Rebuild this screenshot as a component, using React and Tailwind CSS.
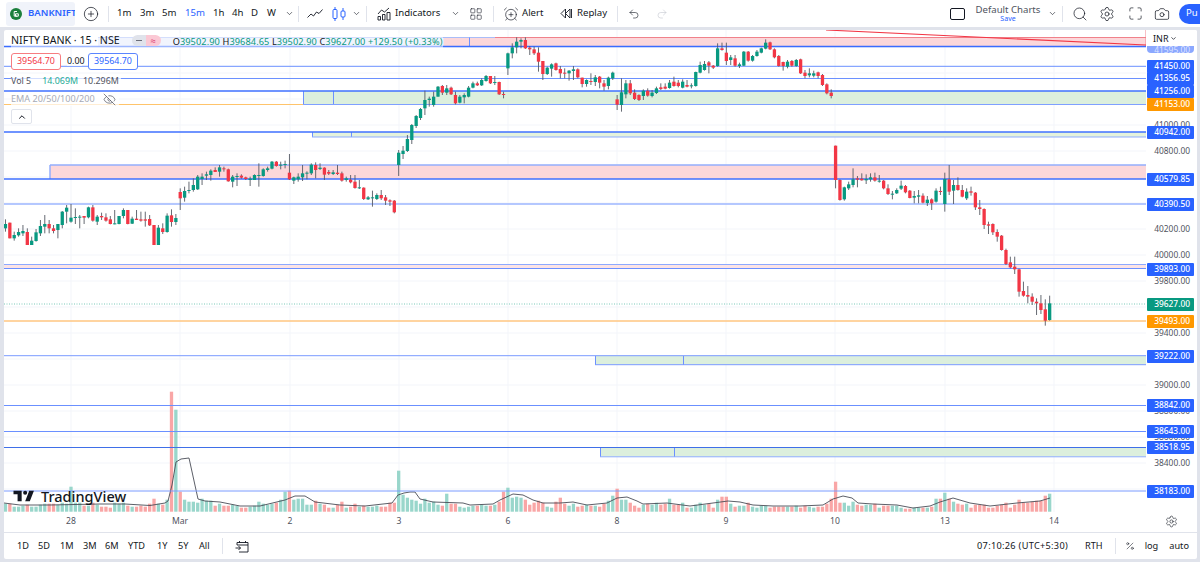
import React from "react";
import { ChevronDown, ChevronUp, CirclePlus, Search, Settings, Maximize, Camera, Undo2, Redo2, AlarmClockPlus, EyeOff, Percent, LayoutGrid } from "lucide-react";

const X0 = 5.47, STEP = 4.369;
const idxOf = (x) => Math.round((x - X0) / STEP);
const xOf = (i) => X0 + STEP * i;

// [zx, green?, top, bottom, wickTop, wickBottom] in zoom coordinates
const S1 = [[18,1,282,295,268,305],[31,0,278,325,278,325],[44,1,315,325,305,332],[57,1,306,316,295,320],[70,1,303,310,285,318],[84,0,306,345,295,345],[97,1,332,345,320,345],[110,1,307,333,297,335],[123,1,288,310,270,318],[137,1,282,290,255,310],[150,0,282,295,270,310],[163,0,295,303,285,310],[176,1,282,300,282,325],[189,1,245,285,243,295],[203,1,233,245,225,280],[216,1,263,275,222,278],[229,1,261,263,235,282],[242,1,260,262,255,295],[255,0,258,263,258,282],[269,1,232,262,230,265],[282,0,232,272,225,275],[295,1,260,275,255,285],[308,0,258,262,248,270],[321,0,262,272,250,275],[334,0,268,282,258,283],[347,1,280,282,240,283],[360,1,258,282,258,283],[373,1,240,258,235,265],[386,0,240,282,240,283],[400,1,266,281,260,282],[413,0,266,270,240,270],[426,0,268,272,245,275],[439,0,268,272,245,290],[452,0,267,286,255,288],[465,0,285,345,285,345],[478,1,293,345,285,345],[491,0,295,306,280,312],[504,1,257,306,250,308],[517,0,256,276,238,290],[531,1,264,276,252,285],[544,0,186,205,175,240],[557,1,183,203,170,215],[570,1,180,183,155,190],[583,1,165,180,145,185],[597,1,140,178,135,180],[610,1,140,147,130,165],[623,1,133,137,125,150],[636,1,122,135,118,152],[649,0,120,126,112,125],[662,1,112,125,105,140],[675,0,115,118,110,125],[688,0,118,154,116,155],[701,1,140,155,135,172],[714,1,138,140,130,168],[727,0,137,143,133,146],[740,0,142,147,140,150],[753,1,146,150,140,168],[766,1,135,150,133,150],[779,1,135,137,100,170],[792,1,118,138,115,140],[805,1,115,120,110,125],[818,1,95,116,93,118],[831,0,95,108,93,110],[844,1,104,106,95,118],[857,1,102,104,92,115],[870,0,128,148,72,150],[883,1,142,152,140,162],[896,1,140,148,130,155],[909,1,130,142,105,153],[922,1,128,130,124,148],[935,1,104,130,100,135],[948,0,105,120,97,145],[961,1,113,117,100,120],[974,0,113,134,112,150],[987,0,126,131,120,135],[1000,1,127,132,120,135],[1013,0,128,132,105,135],[1026,0,130,152,125,155],[1039,1,145,150,140,155],[1052,0,149,157,135,160],[1066,0,155,174,135,176],[1079,1,172,174,150,177],[1092,0,173,207,172,210],[1105,1,202,208,198,210],[1118,1,202,205,182,230],[1131,1,195,207,190,210],[1144,0,195,205,180,210],[1157,0,202,212,195,225],[1170,0,211,215,208,228],[1185,0,212,247,210,250]];
// real pixel coordinates
const S2 = [[399.3,1,152.7,165,150,176],[403.7,1,150.7,154,146,159],[408,1,139,151,135,152],[412.3,1,125,140,124,144],[416.7,1,116,126,115,128],[421,1,109,118,108,120]];
const S3 = [[77,1,300,325,272,345],[90,1,296,300,290,320],[103,1,290,315,275,320],[116,1,260,290,258,290],[129,0,258,278,255,285],[142,1,265,278,255,285],[155,0,263,283,260,285],[168,0,285,310,275,313],[181,1,290,308,285,310],[194,1,285,292,280,310],[207,1,263,290,258,292],[220,1,250,263,245,265],[233,0,250,256,245,258],[246,1,240,256,235,258],[259,1,228,243,225,245],[272,0,228,250,228,252],[285,1,246,248,228,255],[298,0,246,283,245,285],[311,0,282,284,275,295],[324,1,160,205,158,225],[337,1,142,160,130,175],[350,1,125,142,112,160],[363,1,120,125,115,145],[376,0,120,145,112,147],[389,0,143,148,138,165],[402,0,148,160,140,165],[415,0,158,185,142,215],[428,0,183,222,183,240],[441,1,203,222,200,225],[454,1,193,206,190,230],[467,0,190,210,188,212],[480,0,207,220,198,235],[493,0,218,220,205,235],[506,1,212,220,210,242],[519,1,208,213,198,240],[532,0,208,232,205,235],[545,0,233,252,233,262],[558,1,240,252,238,260],[571,0,243,246,220,255],[584,1,232,246,225,258],[601,0,230,248,228,265],[614,0,250,260,240,272],[627,1,233,258,230,268],[640,1,218,235,215,240],[653,0,298,314,285,330],[666,1,277,315,235,335],[679,1,250,283,240,295],[692,0,250,280,240,285],[705,0,278,297,268,300],[718,0,285,300,283,303],[731,1,272,288,268,300],[744,0,272,287,265,290],[757,1,278,288,270,292],[770,1,265,279,260,282],[783,0,262,267,250,270],[796,0,260,266,250,268],[809,1,248,264,240,266],[822,0,245,258,230,260],[835,0,248,258,240,262],[848,1,245,263,238,265],[861,0,255,260,240,262],[874,1,256,258,250,265],[887,1,216,258,215,260],[900,1,195,218,185,220],[913,1,192,210,183,212],[926,0,187,197,183,220],[939,0,197,203,195,207],[952,1,145,198,130,200],[965,0,145,150,128,152],[978,0,158,183,128,195],[991,1,172,180,165,195],[1004,0,175,197,165,200],[1017,1,193,198,188,204],[1030,1,155,197,153,198],[1043,0,155,182,153,185],[1056,1,168,182,165,185],[1069,1,155,168,150,170],[1082,1,145,158,143,160],[1095,1,128,146,118,148],[1108,0,127,148,125,150],[1121,0,148,172,145,175],[1134,0,168,198,165,200],[1147,0,186,198,185,212],[1160,1,185,200,180,205],[1173,0,183,197,180,200],[1186,1,180,198,177,200],[1199,0,178,220,176,222]];
const S4 = [[15,0,218,228,210,235],[28,1,220,226,205,232],[41,1,220,227,212,232],[54,0,217,228,215,235],[67,0,225,255,222,258],[80,0,253,280,250,283],[95,0,278,288,268,295]];
const S5 = [[107,0,47,150,47,175],[120,0,150,210,148,212],[133,1,172,208,170,212],[146,1,163,175,155,180],[160,1,148,165,115,172],[172,0,145,149,138,172],[185,0,146,151,130,152],[198,1,147,151,133,162],[211,1,142,148,130,155],[226,0,142,152,128,155],[239,1,152,154,135,158],[252,0,152,175,150,178],[265,0,175,192,163,195],[278,1,191,193,183,208],[291,1,180,190,175,192],[304,1,167,176,152,180],[317,0,168,187,165,190],[330,0,182,204,180,205],[343,1,198,203,183,220],[356,1,196,200,180,220],[369,0,197,218,190,220],[382,1,209,219,198,228],[395,0,208,220,205,240],[408,1,182,215,175,218],[421,0,183,186,170,195],[435,1,147,222,128,245],[448,0,148,185,105,195],[461,1,165,182,150,222],[474,0,165,180,142,182],[487,0,180,200,165,202],[500,1,185,205,175,210],[513,0,184,188,170,197],[526,0,188,232,186,240],[539,0,232,237,210,255],[552,0,237,285,235,297],[565,0,283,287,275,312],[578,0,282,307,280,315],[591,0,306,320,298,335],[604,0,317,360,315,362],[619,0,360,402,356,405],[632,0,397,412,380,415],[645,0,410,418,380,432],[658,0,418,485,416,500],[671,0,483,497,455,500],[684,0,495,500,468,520],[697,0,500,515,490,525],[710,0,515,520,505,555],[723,0,520,540,495,552],[736,0,538,572,508,587],[749,1,520,570,497,572]];

const candles = new Map();
const add = (list, ox, oy, k) => list.forEach(([zx, g, t, b, wt, wb]) => {
  const i = idxOf(ox + zx * k);
  candles.set(i, { i, g, t: oy + t * k, b: oy + b * k, wt: oy + wt * k, wb: oy + wb * k });
});
add(S1, 0, 130, 1 / 3);
add(S2, 0, 0, 1);
add(S3, 400, 0, 1 / 3);
add(S4, 800, 0, 1 / 3);
add(S5, 800, 130, 1 / 3);

const V6 = [18,8,31,8,44,5,57,5,70,6,84,7,97,5,110,5,123,7,137,8,150,8,163,8,176,7,189,9,203,8,216,25,229,9,242,9,255,6,269,6,282,9,295,7,308,5,321,5,334,4,347,9,360,8,373,9,386,6,400,5,413,5,426,6,439,5,452,8,465,13,478,8,491,7,504,12,517,120,530,102,543,20,556,12,569,10,582,10,595,9,608,13,621,11,634,11,647,6,660,8,673,6,686,6,699,7,712,6,725,4,738,4,751,5,764,6,777,10,790,8,803,7,816,8,829,9,842,12,855,20,868,21,881,12,894,13,907,13,920,7,933,7,946,11,959,8,972,7,985,4,998,4,1011,7,1024,10,1037,4,1050,5,1063,8,1076,5,1089,6,1102,5,1115,5,1128,6,1141,5,1154,5,1167,9,1180,9,1193,41];
const V8 = [5,17,18,14,33,12,47,11,60,8,73,13,86,9,100,10,113,7,126,6,140,18,153,8,166,8,179,5,192,4,205,5,218,6,231,6,244,7,257,6,270,6,283,7,296,10,309,20,323,24,336,14,349,15,362,14,375,12,388,7,401,9,414,11,427,9,440,5,453,4,466,10,479,14,492,8,505,6,518,8,531,5,544,6,557,7,570,6,583,6,596,5,609,8,622,11,635,16,651,23,664,12,677,12,690,9,703,6,716,4,729,7,742,8,755,7,768,9,781,7,794,8,807,13,820,7,833,7,846,9,859,4,872,4,885,7,898,9,911,7,924,8,937,4,950,12,963,15,976,15,989,8,1002,5,1015,6,1028,6,1041,9,1054,5,1067,4,1080,6,1093,6,1106,4,1119,5,1132,5,1145,5,1158,5,1171,5,1184,6,1197,4];
const V7 = [0,4,13,6,26,5,39,4,52,5,65,5,78,8,91,13,107,30,120,9,133,9,146,6,159,10,172,7,185,6,198,7,211,7,224,8,237,4,250,6,263,6,276,6,289,6,302,4,315,3,328,3,341,4,354,4,367,4,380,4,393,5,406,13,421,13,434,19,447,13,460,10,473,8,486,7,499,8,512,4,525,7,538,7,551,7,564,4,577,4,590,6,603,7,616,9,629,4,642,7,655,12,668,9,681,9,694,10,707,11,720,11,733,16,749,18];
const vols = new Map();
const addV = (l, ox) => { for (let n = 0; n < l.length; n += 2) vols.set(idxOf(ox + l[n] / 3), l[n + 1]); };
addV(V6, 0); addV(V8, 400); addV(V7, 800);

const MA = "4,503 20,505 50,505 100,504 125,504 150,505.5 165,503 168,501 172,485 176,462 181,459 189,458 198,499 205,501 220,502 240,506 260,506 285,500 295,496 305,496 315,502 340,505 365,506 392,503 398,495 404,493 410,492 415,492 420,499 433,502 463,503 470,505 493,504 500,500 513,494 523,495 533,500 543,503 560,503 573,502 587,505 607,503 617,498 627,497 637,501 643,504 667,503 690,506 713,503 728,501 740,502 753,505 773,506 800,506 823,505 833,499 843,496 852,498 858,503 873,504 897,505 913,508 930,506 940,502 953,498 970,503 990,506 1017,503 1040,501 1050,498";

const days = [[71,"28"],[180,"Mar"],[290,"2"],[399,"3"],[508,"6"],[617,"8"],[726,"9"],[835,"10"],[945,"13"],[1054,"14"]];
const gridY = [47,73,99,125,151,177,203,229,255,281,307,333,359,385,411,437,463,489];

const hLines = [
  [66.3,4,"#6b90ff",1],[78.5,4,"#6b90ff",1],[91,4,"#3f70ff",1.3],[104.5,303,"#7fa0ff",1],[104.5,4,"#ffc46b",1,303],
  [132,4,"#3f70ff",1.3],[137,312,"#8fadff",1],[165,50,"#93aefc",1.5],[179,4,"#3f70ff",1.3],[204,4,"#9db6ff",1.5],
  [264.5,4,"#8da9ff",1],[268.5,4,"#6b90ff",1],[321,4,"#ffc680",1.5],[355.7,4,"#7a9bff",1],[364.7,595,"#7a9bff",1],
  [405.5,4,"#6b90ff",1],[431.5,4,"#6b90ff",1],[447.5,4,"#3f6fe8",1],[456.8,600,"#8fadff",1],[491,4,"#7a9bff",1],[46.5,4,"#3a6cff",1.6],
];
const zones = [
  [444,37.5,702,9,"#fcd7da"],[98,37.5,346,9,"#e3e9fb"],[303,91,843,13.5,"#dcefdd"],[312,132,834,5,"#e4f2dc"],[50,165,1096,14,"#fcd7da"],
  [4,264.5,1142,4,"#fce3e5"],[595,355.7,551,9,"#dcefdd"],[600,447.5,546,9.3,"#dcefdd"],
];
const vLines = [[303.5,91,104.5],[333.5,91,104.5],[312.5,132,137],[351.5,132,137],[50,165,179],[469.5,37.5,46.5],[595.5,356,365],[683.5,356,365],[600.5,448,457],[674.5,448,457]];

function Chart() {
  const cs = [...candles.values()];
  return (
    <svg className="block absolute left-0 top-0" width="1142" height="482" viewBox="4 30 1142 482">
      {gridY.map((y) => <line key={y} x1="4" x2="1146" y1={y} y2={y} stroke="#f3f5fa" />)}
      {days.map(([x]) => <line key={x} x1={x} x2={x} y1="30" y2="512" stroke="#f3f5fa" />)}
      {[...vols.entries()].map(([i, h]) => {
        const c = candles.get(i);
        return <rect key={i} x={xOf(i) - 1.65} y={511.7 - h} width="3.3" height={h} fill={c && !c.g ? "#f9a6a6" : "#99d6cb"} />;
      })}
      <polyline points={MA} fill="none" stroke="#4a4d57" strokeWidth="0.9" />
      {zones.map(([x, y, w, h, f], n) => <rect key={n} x={x} y={y} width={w} height={h} fill={f} />)}
      <line x1="495" x2="1146" y1="37.5" y2="37.5" stroke="#f0818a" />
      <line x1="98" x2="495" y1="37.5" y2="37.5" stroke="#a9bdf8" />
      <line x1="1146" x2="1146" y1="30" y2="46" stroke="#f0818a" />
      {vLines.map(([x, a, b], n) => <line key={n} x1={x} x2={x} y1={a} y2={b} stroke={n === 4 ? "#93aefc" : "#6b90ff"} strokeWidth={n === 4 ? 1.5 : 1} />)}
      {hLines.map(([y, a, col, sw, b], n) => <line key={n} x1={a} x2={b || 1146} y1={y} y2={y} stroke={col} strokeWidth={sw} />)}
      <line x1="4" x2="1146" y1="304" y2="304" stroke="#7cc9ba" strokeDasharray="1 1.5" />
      <line x1="826" y1="30" x2="1146" y2="45" stroke="#f23645" strokeWidth="1.1" />
      {cs.map((c) => {
        const x = xOf(c.i);
        const col = c.g ? "#089981" : "#f23645";
        return (
          <g key={c.i}>
            <line x1={x} x2={x} y1={c.wt} y2={c.wb} stroke="#555963" strokeWidth="0.9" />
            <rect x={x - 1.65} y={c.t} width="3.3" height={Math.max(c.b - c.t, 1)} fill={col} />
          </g>
        );
      })}
    </svg>
  );
}

const priceGray = [[125,"41000.00"],[151,"40800.00"],[229,"40200.00"],[255,"40000.00"],[281,"39800.00"],[333,"39400.00"],[385,"39000.00"],[411,"38800.00"],[437,"38600.00"],[463,"38400.00"]];
const priceTags = [[66.5,"41450.00","#2962ff"],[78.5,"41356.95","#2962ff"],[91.5,"41256.00","#2962ff"],[104.5,"41153.00","#ff9800"],[132.5,"40942.00","#2962ff"],[179,"40579.85","#2962ff"],[204,"40390.50","#2962ff"],[269.5,"39893.00","#2962ff"],[304,"39627.00","#089981"],[321,"39493.00","#ff9800"],[356,"39222.00","#2962ff"],[405.5,"38842.00","#2962ff"],[431.5,"38643.00","#2962ff"],[447.5,"38518.95","#2962ff"],[491,"38183.00","#2962ff"]];

function PriceAxis() {
  return (
    <div className="relative w-[51px] h-full bg-white overflow-hidden text-[8.4px] leading-none">
      {priceGray.map(([y, t]) => (
        <div key={t} className="absolute right-[7px] text-[#50535e]" style={{ top: y - 30 - 4.5 }}>{t}</div>
      ))}
      <div className="absolute left-[1px] w-[47px] top-[16px] h-[7px] bg-[#8ba8ff] overflow-hidden rounded-b-sm text-right pr-[4px] text-white/70">41595.00</div>
      {priceTags.map(([y, t, c]) => (
        <div key={t} className="absolute left-[1px] w-[47px] h-[13px] rounded-[1px] flex items-center justify-end pr-[4px] text-white font-medium" style={{ top: y - 30 - 6.5, background: c }}>{t}</div>
      ))}
      <div className="absolute left-[7px] top-[4px] flex items-center text-[9px] text-[#131722]">INR<ChevronDown size={7} strokeWidth={2.5} className="ml-[1px]" /></div>
    </div>
  );
}

function Sep({ ml }) {
  return <div className={`w-px h-[16px] shrink-0 bg-[#e0e3eb] ${ml}`} />;
}

function Legend() {
  return (
    <div className="absolute left-[7px] top-[3px] flex flex-col items-start text-[#131722]">
      <div className="flex items-center h-[15px] bg-white/50">
        <span className="text-[10.6px] leading-none whitespace-nowrap">NIFTY BANK · 15 · NSE</span>
        <span className="ml-[12px] flex w-[29px] h-[11px] rounded-full overflow-hidden">
          <span className="w-[14px] bg-[#e0e3eb] flex items-center justify-center"><span className="w-[6px] h-[1.5px] bg-[#6a6d78]" /></span>
          <span className="w-[15px] bg-[#fbc8d4] flex items-center justify-center text-[9px] leading-none text-[#d81b60]">≈</span>
        </span>
        <span className="ml-[12px] text-[9.2px] leading-none mt-[3px] whitespace-nowrap tracking-[0.1px]">
          O<span className="text-[#089981]">39502.90</span> H<span className="text-[#089981]">39684.65</span> L<span className="text-[#089981]">39502.90</span> C<span className="text-[#089981]">39627.00</span> <span className="text-[#089981]">+129.50 (+0.33%)</span>
        </span>
      </div>
      <div className="flex items-center mt-[5px] h-[17px] text-[8.9px] leading-none">
        <span className="w-[50px] h-[17px] flex items-center justify-center rounded-[3px] border border-[#f77c80] bg-white text-[#f23645]">39564.70</span>
        <span className="ml-[6px] w-[15px] text-center text-[#131722] bg-white/70">0.00</span>
        <span className="ml-[6px] w-[50px] h-[17px] flex items-center justify-center rounded-[3px] border border-[#5b85ff] bg-white text-[#2962ff]">39564.70</span>
      </div>
      <div className="flex items-center mt-[4px] h-[14px] text-[8.9px] leading-none bg-white/70 pr-[2px]">
        <span className="text-[#50535e]">Vol 5</span>
        <span className="ml-[11px] text-[#22ab94]">14.069M</span>
        <span className="ml-[5px] text-[#50535e]">10.296M</span>
      </div>
      <div className="flex items-center mt-[4px] h-[14px] text-[9.1px] leading-none bg-white/70 pr-[3px]">
        <span className="text-[#a8abb5]">EMA 20/50/100/200</span>
        <EyeOff size={13} strokeWidth={1.3} className="ml-[8px] text-[#50535e]" />
      </div>
      <div className="mt-[3px] w-[21px] h-[15px] rounded-[2px] border border-[#e0e3eb] bg-white flex items-center justify-center">
        <ChevronUp size={10} strokeWidth={2.4} className="text-[#131722]" />
      </div>
    </div>
  );
}

function Logo() {
  return (
    <div className="absolute left-[9px] top-[459px] flex items-center text-[#131722]">
      <svg width="22" height="14" viewBox="0 0 36 24"><path d="M14 3H0v6h7v12h7V3zM28 21h-8l7-18h8l-7 18z" fill="#131722" /><circle cx="20" cy="6.5" r="3.5" fill="#131722" /></svg>
      <span className="ml-[6px] text-[14.5px] leading-none font-medium">TradingView</span>
    </div>
  );
}

const tfs = [["1m","ml-[8px] w-[13px]"],["3m","ml-[10px] w-[13px]"],["5m","ml-[9px] w-[13px]"],["15m","ml-[10px] w-[18px] text-[#2962ff]"],["1h","ml-[10px] w-[10px]"],["4h","ml-[9px] w-[11px]"],["D","ml-[8px] w-[6px]"],["W","ml-[10px] w-[9px]"]];
const ranges = [["1D","ml-[13px] w-[11px]"],["5D","ml-[10px] w-[11px]"],["1M","ml-[11px] w-[13px]"],["3M","ml-[10px] w-[12px]"],["6M","ml-[10px] w-[13px]"],["YTD","ml-[10px] w-[18px]"],["1Y","ml-[11px] w-[10px]"],["5Y","ml-[11px] w-[10px]"],["All","ml-[11px] w-[12px]"]];

function Toolbar() {
  return (
    <div className="h-[27px] shrink-0 bg-white flex items-center text-[9.6px] text-[#131722] overflow-hidden whitespace-nowrap">
      <div className="ml-[6px] w-[69px] shrink-0 h-[24px] rounded-[3px] bg-[#f0f3fa] flex items-center overflow-hidden">
        <svg className="ml-[4px] shrink-0" width="12" height="12" viewBox="0 0 12 12"><circle cx="6" cy="6" r="6" fill="#1b7f3c" /><path d="M7 3.500H4.200v4.600H7M5.500 5.800h2.800v2.400H5.500z" fill="none" stroke="#fff" strokeWidth="1" /></svg>
        <span className="ml-[6px] font-semibold text-[#2962ff] text-[9.6px]">BANKNIFTY</span>
      </div>
      <CirclePlus size={16} strokeWidth={1.1} className="ml-[8px] shrink-0" />
      <Sep ml="ml-[9px]" />
      {tfs.map(([t, c]) => <span key={t} className={`shrink-0 ${c}`}>{t}</span>)}
      <ChevronDown size={9} strokeWidth={1.6} className="ml-[9px] shrink-0" />
      <Sep ml="ml-[4px]" />
      <svg className="ml-[8px] shrink-0" width="16" height="10" viewBox="0 0 16 10" fill="none" stroke="#131722" strokeWidth="0.9"><path d="M0.500 8.500 4 5l2.500 2 3-4 2.500 1.500 3.500-4" /></svg>
      <svg className="ml-[9px] shrink-0" width="14" height="16" viewBox="0 0 14 16" fill="none" stroke="#2962ff" strokeWidth="1"><rect x="1" y="3.500" width="4" height="9" rx="1" /><path d="M3 1v2.500M3 12.500V15M11 2v3M11 11v3" /><rect x="9" y="5" width="4" height="6" rx="1" /></svg>
      <ChevronDown size={9} strokeWidth={1.6} className="ml-[6px] shrink-0" />
      <Sep ml="ml-[5px]" />
      <svg className="ml-[10px] shrink-0" width="14" height="14" viewBox="0 0 14 14" fill="none" stroke="#131722" strokeWidth="0.9"><path d="M1 7 4.500 3l3 2L12 1" /><path d="M1 13V9.500h2.500V13zM5.500 13V7.500H8V13zM10 13V5.500h3V13z" /></svg>
      <span className="ml-[4px] w-[45px] shrink-0">Indicators</span>
      <ChevronDown size={9} strokeWidth={1.6} className="ml-[11px] shrink-0" />
      <LayoutGrid size={14} strokeWidth={1} className="ml-[9px] shrink-0" />
      <Sep ml="ml-[10px]" />
      <AlarmClockPlus size={16} strokeWidth={1} className="ml-[9px] shrink-0" />
      <span className="ml-[3px] w-[22px] shrink-0">Alert</span>
      <svg className="ml-[16px] shrink-0" width="12" height="11" viewBox="0 0 12 11" fill="none" stroke="#131722" strokeWidth="0.9"><path d="M5.500 1 1 5.500 5.500 10zM10 1 5.500 5.500 10 10zM11.500 1v9" /></svg>
      <span className="ml-[5px] w-[30px] shrink-0">Replay</span>
      <Sep ml="ml-[10px]" />
      <Undo2 size={12} strokeWidth={1.2} className="ml-[10px] shrink-0" />
      <Redo2 size={12} strokeWidth={1.2} className="ml-[16px] shrink-0 text-[#c4c7d0]" />
      <div className="ml-auto flex items-center">
        <div className="w-[15px] h-[12px] rounded-[2px] border border-[#131722]" />
        <div className="ml-[10px] w-[66px] flex flex-col items-center leading-none">
          <span className="text-[9.6px] leading-[11px] text-[#50535e]">Default Charts</span>
          <span className="text-[7px] leading-[8px] text-[#2962ff]">Save</span>
        </div>
        <ChevronDown size={9} strokeWidth={1.6} className="ml-[7px]" />
        <Sep ml="ml-[5px]" />
        <Search size={16} strokeWidth={1.1} className="ml-[9px]" />
        <Settings size={16} strokeWidth={1.1} className="ml-[11px]" />
        <Maximize size={15} strokeWidth={1.1} className="ml-[13px]" />
        <Camera size={16} strokeWidth={1.1} className="ml-[11px]" />
        <div className="ml-[9px] w-[21px] h-[20px] rounded-l-full bg-[#2962ff] text-white text-[9.6px] pl-[7px] flex items-center overflow-hidden">Pu</div>
      </div>
    </div>
  );
}

export default function App() {
  return (
    <div className="w-[1200px] h-[562px] bg-[#e0e3eb] flex flex-col overflow-hidden" style={{ fontFamily: '"Noto Sans", sans-serif' }}>
      <Toolbar />
      <div className="flex-1 min-h-0 mt-[3px] ml-[4px] mr-[3px] mb-[3px] bg-white rounded-[2px] flex flex-col overflow-hidden">
        <div className="h-[482px] flex shrink-0">
          <div className="relative w-[1142px] h-full overflow-hidden">
            <Chart />
            <Legend />
            <Logo />
          </div>
          <PriceAxis />
        </div>
        <div className="relative h-[20px] shrink-0 text-[8.6px] text-[#50535e]">
          {days.map(([x, t]) => (
            <span key={t} className="absolute top-[5px] leading-none -translate-x-1/2" style={{ left: x - 4 }}>{t}</span>
          ))}
          <Settings size={13} strokeWidth={1.1} className="absolute left-[1161px] top-[3px] text-[#131722]" />
        </div>
        <div className="flex-1 border-t border-[#e0e3eb] flex items-center text-[9.2px] text-[#131722] whitespace-nowrap">
          {ranges.map(([t, c]) => <span key={t} className={`shrink-0 ${c}`}>{t}</span>)}
          <Sep ml="ml-[11px]" />
          <svg className="ml-[12px] shrink-0" width="14" height="13" viewBox="0 0 14 13" fill="none" stroke="#131722" strokeWidth="0.9"><path d="M2 5V2.500h11V12H4M4.500 1v2M10.500 1v2M2 5h11M0.500 8h5M3.500 6l2 2-2 2" /></svg>
          <div className="ml-auto flex items-center">
            <span className="tracking-[0.3px]">07:10:26 (UTC+5:30)</span>
            <span className="ml-[17px]">RTH</span>
            <Sep ml="ml-[12px]" />
            <Percent size={10} strokeWidth={1.3} className="ml-[9px]" />
            <span className="ml-[10px]">log</span>
            <span className="ml-[11px] mr-[8px]">auto</span>
          </div>
        </div>
      </div>
    </div>
  );
}
